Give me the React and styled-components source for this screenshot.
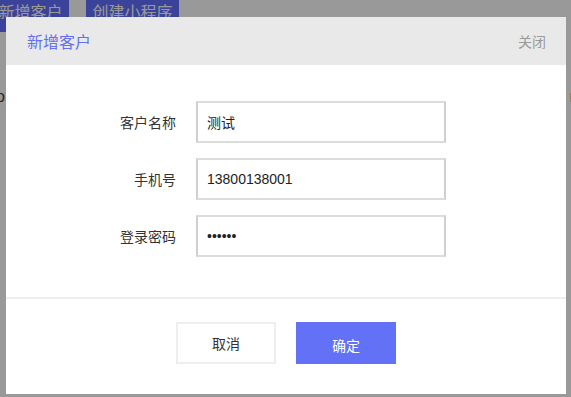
import React from "react"
import styled, { createGlobalStyle } from "styled-components"

const GlobalStyle = createGlobalStyle`
  html, body {
    margin: 0;
    padding: 0;
    background: #fff;
    font-family: "Liberation Sans", "Noto Sans CJK SC", sans-serif;
  }
  #root {
    width: 571px;
    height: 397px;
    position: relative;
    overflow: hidden;
  }
`

const fields = [
  { label: "客户名称", value: "测试", type: "text" },
  { label: "手机号", value: "13800138001", type: "text" },
  { label: "登录密码", value: "123456", type: "password" }
]

const App = () => (
  <>
    <GlobalStyle />
    <Page>
      <Toolbar>
        <PageButton $offset="-8px" $width="77px">新增客户</PageButton>
        <PageButton $width="93px">创建小程序</PageButton>
      </Toolbar>
      <PageRow>
        <span>o</span>
        <span>r</span>
      </PageRow>
    </Page>
    <Mask />
    <Modal>
      <Header>
        <Title>新增客户</Title>
        <Close>关闭</Close>
      </Header>
      <Body>
        {fields.map(f => (
          <Row key={f.label}>
            <Label>{f.label}</Label>
            <Input type={f.type} defaultValue={f.value} />
          </Row>
        ))}
      </Body>
      <Footer>
        <Button>取消</Button>
        <Button $primary>确定</Button>
      </Footer>
    </Modal>
  </>
)

const Page = styled.div`
  width: 571px;
  height: 397px;
`

const Toolbar = styled.div`
  display: flex;
  gap: 17px;
`

const PageButton = styled.div`
  height: 32px;
  width: ${p => p.$width};
  margin-left: ${p => p.$offset || 0};
  background: #6270ff;
  color: #fff;
  font-size: 16px;
  line-height: 26px;
  text-align: center;
  white-space: nowrap;
`

const PageRow = styled.div`
  display: flex;
  justify-content: space-between;
  margin: 56px -4px 0 -4px;
  font-size: 16px;
  color: #444;
`

const Mask = styled.div`
  position: absolute;
  inset: 0;
  background: rgba(0, 0, 0, 0.4);
`

const Modal = styled.div`
  position: absolute;
  top: 17px;
  left: 6px;
  width: 560px;
  height: 377px;
  background: #fff;
  display: flex;
  flex-direction: column;
`

const Header = styled.div`
  height: 48px;
  background: #e9e9e9;
  display: flex;
  align-items: center;
  justify-content: space-between;
  padding: 0 20px 0 21px;
`

const Title = styled.div`
  font-size: 16px;
  color: #6470f0;
`

const Close = styled.div`
  font-size: 14px;
  color: #999;
`

const Body = styled.div`
  padding: 36px 0 40px 90px;
  display: flex;
  flex-direction: column;
  gap: 15px;
  border-bottom: 2px solid #eeeeee;
`

const Row = styled.div`
  display: flex;
  align-items: center;
  gap: 20px;
`

const Label = styled.div`
  width: 80px;
  text-align: right;
  font-size: 14px;
  color: #333;
`

const Input = styled.input`
  box-sizing: border-box;
  width: 250px;
  height: 42px;
  border: 2px solid #dcdcdc;
  border-left-color: #cfcfcf;
  border-right-color: #cfcfcf;
  padding: 0 9px;
  font-family: "Liberation Sans", "Noto Sans CJK SC", sans-serif;
  font-size: 14px;
  color: #222;
  outline: none;
`

const Footer = styled.div`
  flex: 1;
  display: flex;
  justify-content: center;
  gap: 20px;
  padding-top: 23px;
`

const Button = styled.div`
  box-sizing: border-box;
  width: 100px;
  height: 42px;
  display: flex;
  align-items: center;
  justify-content: center;
  padding-top: ${p => (p.$primary ? "4px" : "0")};
  font-size: 14px;
  background: ${p => (p.$primary ? "#6271f5" : "#fff")};
  color: ${p => (p.$primary ? "#fff" : "#333")};
  border: 2px solid ${p => (p.$primary ? "#6271f5" : "#eeeeee")};
`

export default App
